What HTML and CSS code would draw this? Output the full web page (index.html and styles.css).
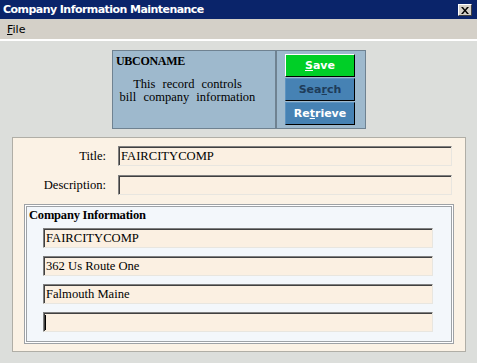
FILE: index.html
```html
<!DOCTYPE html>
<html lang="en">
<head>
  <meta charset="UTF-8">
  <title>Company Information Maintenance</title>
  <link rel="stylesheet" href="styles.css">
</head>
<body>
  <div class="window">
    <div class="titlebar">
      <span class="title">Company Information Maintenance</span>
      <span class="close-btn">
        <svg width="8" height="7" viewBox="0 0 8 7"><path d="M0 0h2l2 2.5 2-2.5h2l-3 3.5 3 3.5h-2l-2-2.5-2 2.5h-2l3-3.5z" fill="#000"/></svg>
      </span>
    </div>
    <div class="menubar">
      <span class="menu-item"><u>F</u>ile</span>
    </div>

    <div class="content">
      <div class="header-panel">
        <div class="header-info">
          <div class="header-name">UBCONAME</div>
          <div class="header-desc">This record controls<br>bill company information</div>
        </div>
        <div class="header-buttons">
          <div class="btn btn-save"><u>S</u>ave</div>
          <div class="btn btn-search">Sea<u>r</u>ch</div>
          <div class="btn btn-retrieve">Re<u>t</u>rieve</div>
        </div>
      </div>

      <div class="form-panel">
        <div class="form-row">
          <label class="form-label">Title:</label>
          <div class="field">FAIRCITYCOMP</div>
        </div>
        <div class="form-row">
          <label class="form-label">Description:</label>
          <div class="field"></div>
        </div>

        <div class="company-box">
          <div class="company-heading">Company Information</div>
          <div class="company-fields">
            <div class="field">FAIRCITYCOMP</div>
            <div class="field">362 Us Route One</div>
            <div class="field">Falmouth Maine</div>
            <div class="field"><span class="caret"></span></div>
          </div>
        </div>
      </div>
    </div>
  </div>
</body>
</html>
```

FILE: styles.css
```css
body {
  margin: 0;
  background: #dcdedb;
  font-family: "Liberation Serif", serif;
  color: #000;
}
.window {
  width: 477px;
  height: 363px;
  background: #dcdedb;
}
.titlebar {
  height: 19px;
  background: #0a246a;
  display: flex;
  align-items: center;
  justify-content: space-between;
  padding: 0 5px 0 3px;
}
.title {
  font-family: "DejaVu Sans", sans-serif;
  font-weight: bold;
  font-size: 11px;
  color: #fff;
  letter-spacing: -0.55px;
}
.close-btn {
  width: 12px;
  height: 10px;
  margin-top: 1px;
  background: #d4d0c8;
  border: 1px solid;
  border-color: #fff #404040 #404040 #fff;
  display: flex;
  align-items: center;
  justify-content: center;
}
.menubar {
  height: 20px;
  background: #d4d0c8;
  border-bottom: 2px solid #fff;
  display: flex;
  align-items: center;
  padding-left: 7px;
}
.menu-item {
  font-family: "DejaVu Sans", sans-serif;
  font-size: 11px;
}
.content {
  padding: 9px 11px 0 12px;
}
.header-panel {
  display: flex;
  width: 254px;
  height: 79px;
  margin-left: 100px;
  background: #9eb9cd;
  border: 1px solid #6f8291;
  box-sizing: border-box;
}
.header-info {
  width: 164px;
  border-right: 2px solid #6f8291;
  padding: 3px 0 0 3px;
  box-sizing: border-box;
}
.header-name {
  font-family: "Liberation Serif", serif;
  font-weight: bold;
  font-size: 12px;
  letter-spacing: -0.3px;
}
.header-desc {
  margin-top: 9px;
  padding-right: 16px;
  font-family: "Liberation Serif", serif;
  font-size: 12.5px;
  line-height: 13px;
  text-align: center;
  word-spacing: 4px;
}
.header-buttons {
  display: flex;
  flex-direction: column;
  gap: 1px;
  padding: 3px 0 0 8px;
}
.btn {
  width: 70px;
  height: 23px;
  box-sizing: border-box;
  border: 1px solid;
  border-color: #fff #000 #000 #fff;
  display: flex;
  align-items: center;
  justify-content: center;
  font-family: "DejaVu Sans", sans-serif;
  font-weight: bold;
  font-size: 11px;
  color: #fff;
}
.btn-save {
  background: #00cf27;
}
.btn-search {
  background: #4682b4;
  color: #1e3c5a;
  border-color: #5d93c0 #000 #000 #5d93c0;
}
.btn-retrieve {
  background: #4682b4;
  border-color: #5d93c0 #000 #000 #5d93c0;
}
.form-panel {
  margin-top: 8px;
  width: 454px;
  height: 215px;
  box-sizing: border-box;
  background: #fbf2e5;
  border: 1px solid #b0aea6;
  padding: 8px 13px 0 0;
}
.form-row {
  display: flex;
  align-items: center;
  margin-bottom: 9px;
}
.form-label {
  width: 93px;
  margin-right: 12px;
  text-align: right;
  font-family: "Liberation Serif", "DejaVu Serif", serif;
  font-size: 12.6px;
}
.field {
  flex: 1;
  height: 20px;
  box-sizing: border-box;
  background: #fbf0e2;
  border: 1px solid;
  border-color: #808080 #e8e6e0 #e8e6e0 #808080;
  box-shadow: inset 1px 1px 0 #404040;
  padding: 0 0 0 2px;
  display: flex;
  align-items: center;
  font-family: "Liberation Serif", "DejaVu Serif", serif;
  font-size: 12.6px;
}
.company-box {
  margin-left: 11px;
  width: 430px;
  height: 140px;
  box-sizing: border-box;
  background: #f3f7fb;
  border: 1px solid #9ea2a6;
  box-shadow: inset 0 0 0 1px #fff, inset 0 0 0 2px #9ea2a6;
  padding: 3px 20px 0 4px;
}
.company-heading {
  font-family: "Liberation Serif", serif;
  font-weight: bold;
  font-size: 12.5px;
  line-height: 14px;
  letter-spacing: -0.2px;
}
.company-fields {
  display: flex;
  flex-direction: column;
  gap: 8px;
  margin: 6px 0 0 14px;
}
.company-fields .field {
  flex: none;
}
.caret {
  width: 1px;
  height: 15px;
  background: #000;
  margin-left: -1px;
}
```
